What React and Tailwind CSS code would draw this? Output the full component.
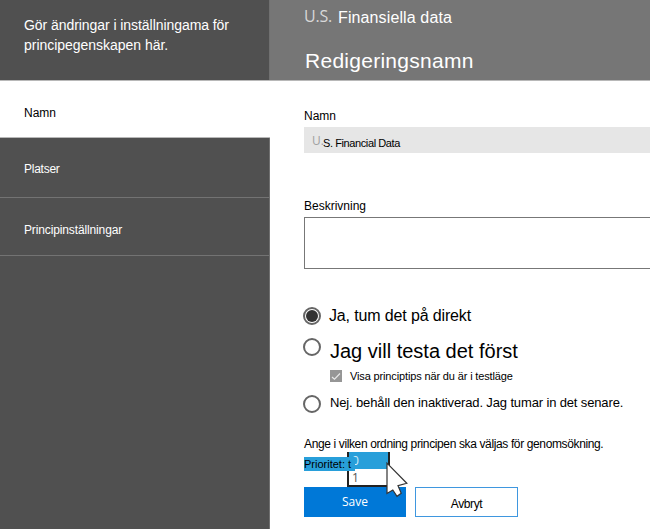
function Radio({ checked }) {
  return (
    <span className="-ml-px flex size-[18px] shrink-0 items-center justify-center rounded-full border-2 border-[#666] bg-white">
      {checked && <span className="size-[12px] rounded-full bg-[#333]" />}
    </span>
  );
}

function Sidebar() {
  return (
    <aside className="flex w-[270px] shrink-0 flex-col border-r border-[#707070] bg-[#505050] text-white">
      <div className="h-20 pt-[15px] pl-6 text-[14px] leading-5">
        <p className="tracking-[-0.06px] whitespace-nowrap">Gör ändringar i inställningama för</p>
        <p className="tracking-[-0.03px] whitespace-nowrap">principegenskapen här.</p>
      </div>
      <nav className="text-[12px] leading-4">
        <div className="-mr-px h-[58px] border-y border-[#b8b8b8] bg-white pt-6 pl-6 text-black">Namn</div>
        <div className="h-[60px] border-b border-[#737373] pt-[23px] pl-6 tracking-[-0.25px]">Platser</div>
        <div className="h-[58px] border-b border-[#737373] pt-6 pl-6 tracking-[-0.13px]">Principinställningar</div>
      </nav>
    </aside>
  );
}

function Header() {
  return (
    <header className="h-[81px] border-b border-[#b8b8b8] bg-[#767676] pl-[34px] text-white">
      <div className="flex h-9 pt-[6px] leading-5">
        <span className="w-[34px] font-['Open_Sans',sans-serif] text-[16px] tracking-[-0.2px] text-[#d8d8d8]">U.S.</span>
        <span className="pt-[2px] text-[16px] tracking-[0.12px]">Finansiella data</span>
      </div>
      <h1 className="pt-[12px] pl-px text-[21px] leading-[26px] tracking-[0.27px]">Redigeringsnamn</h1>
    </header>
  );
}

function Priority() {
  return (
    <div className="relative h-[35px] text-[12px]">
      <div className="absolute top-0 left-[43px] h-[35px] w-[43px] border-x-2 border-b-2 border-[#222] bg-white text-[#555]">
        <div className="h-[17px] bg-[#289fda] pl-[3px] font-['Open_Sans',sans-serif] leading-[17px] text-[#d5ecf8]">0</div>
        <div className="pl-[3px] font-['Open_Sans',sans-serif] leading-[17px]">1</div>
      </div>
      <span className="absolute top-[5px] left-0 h-[14px] w-[51px] bg-[#289fda] text-[11px] leading-[14px] whitespace-nowrap text-black">
        Prioritet: t
      </span>
      <svg className="absolute top-[10px] left-[82px] z-10" width="23" height="36" viewBox="0 0 23 36">
        <path d="M1 1.2V31.5L6.8 28L11 34.3L15.2 31.2L12 23.6L20.8 21.3Z" fill="white" stroke="#333" strokeWidth="1.2" />
      </svg>
    </div>
  );
}

export default function App() {
  return (
    <div className="flex h-[529px] w-[650px] overflow-hidden bg-white font-['Liberation_Sans',Arial,sans-serif] text-black">
      <Sidebar />
      <div className="min-w-0 flex-1">
        <Header />
        <main className="pl-[34px] text-[12px] leading-4">
          <div className="h-[46px] pt-[27px]">Namn</div>
          <div className="flex h-[26px] bg-[#e6e6e6] pl-2">
            <span className="w-[11px] pt-[6px] font-['Open_Sans',sans-serif] text-[12px] text-[#a0a0a0]">U.</span>
            <span className="pt-[8px] text-[11px] tracking-[-0.4px]">S. Financial Data</span>
          </div>
          <div className="h-[64px] pt-[45px]">Beskrivning</div>
          <div className="h-[52px] border border-r-0 border-[#777] bg-white" />

          <div className="flex h-[60px] items-end pb-[4px]">
            <Radio checked />
            <span className="pl-2 text-[16px] leading-[18px] tracking-[-0.14px]">Ja, tum det på direkt</span>
          </div>
          <div className="flex h-[39px] pt-[9px]">
            <Radio />
            <span className="pt-[1px] pl-[9px] text-[20px] leading-6">Jag vill testa det först</span>
          </div>
          <div className="flex h-[26px] items-start pt-[1px] pl-[26px]">
            <span className="mt-px flex size-3 items-center justify-center bg-[#969696]">
              <svg width="10" height="9" viewBox="0 0 10 9" fill="none" stroke="#e8e8e8" strokeWidth="1.2">
                <path d="M1 5L3.5 7.2L9 1.5" />
              </svg>
            </span>
            <span className="pl-2 text-[11px] leading-[14px] tracking-[-0.14px]">Visa principtips när du är i testläge</span>
          </div>
          <div className="flex h-[42px]">
            <span className="pt-[1px]"><Radio /></span>
            <span className="pt-px pl-[9px] text-[13px] tracking-[-0.14px]">Nej. behåll den inaktiverad. Jag tumar in det senare.</span>
          </div>
          <p className="h-[16px] tracking-[-0.37px] whitespace-nowrap">Ange i vilken ordning principen ska väljas för genomsökning.</p>
          <Priority />
          <div className="flex gap-[9px]">
            <button className="h-[30px] w-[102px] bg-[#0078d7] font-['Open_Sans',sans-serif] text-[12px] text-white">Save</button>
            <button className="h-[30px] w-[103px] border border-[#3f97df] bg-white pt-1 text-[12px] tracking-[-0.4px]">Avbryt</button>
          </div>
        </main>
      </div>
    </div>
  );
}
